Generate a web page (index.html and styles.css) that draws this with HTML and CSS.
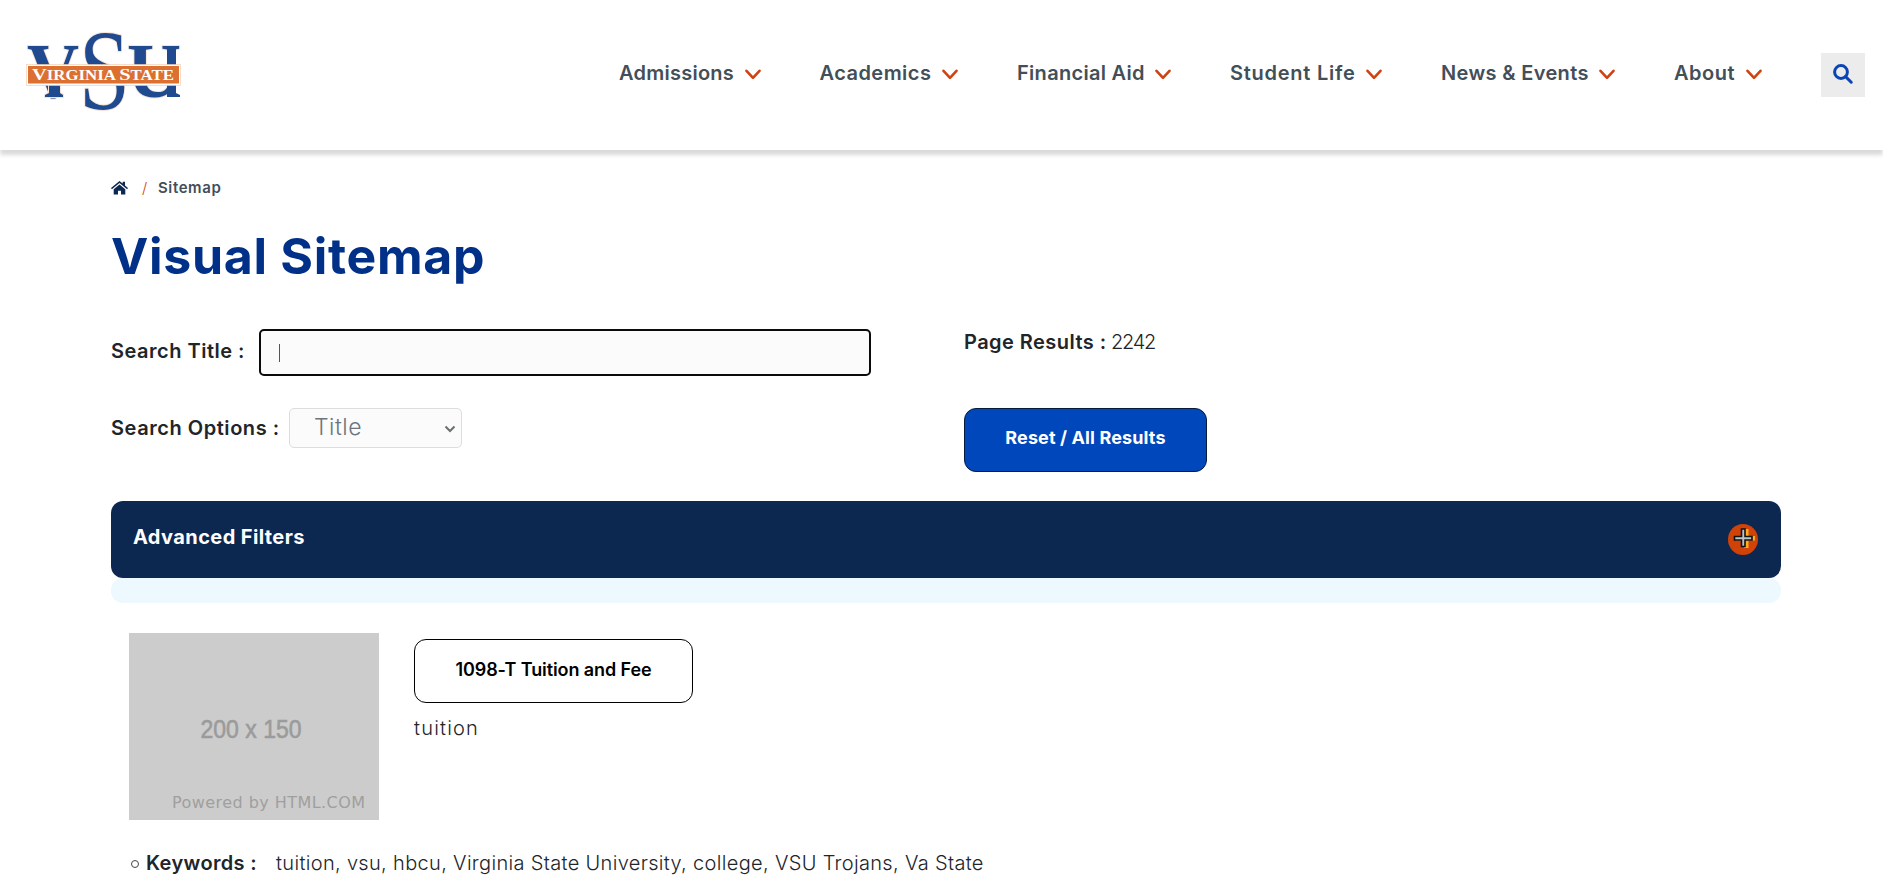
FILE: index.html
```html
<!DOCTYPE html>
<html lang="en">
<head>
<meta charset="utf-8">
<title>Visual Sitemap</title>
<link rel="stylesheet" href="styles.css">
</head>
<body>
<header class="site-header">
  <svg class="logo" width="170" height="100" viewBox="0 0 170 100" role="img" aria-label="VSU Virginia State">
    <g class="logo-letters">
      <text x="7" y="69" font-size="79" textLength="52" lengthAdjust="spacingAndGlyphs">V</text>
      <path d="M29 57h11v8l3 2v2H25v-2l4-2Z"/>
      <text x="107" y="69" font-size="79" textLength="54" lengthAdjust="spacingAndGlyphs">U</text>
      <path class="logo-stem" d="M147 18h9v47l4 2v2H147Z"/>
      <text class="logo-s" x="59" y="81" font-size="115" textLength="51" lengthAdjust="spacingAndGlyphs">S</text>
    </g>
    <rect x="6.500" y="36.500" width="154" height="21" fill="#fff" stroke="#f3c6a8" stroke-width=".6"/>
    <rect x="8" y="38" width="151" height="17.500" fill="#db7030"/>
    <text class="logo-name" x="12" y="52" font-size="17.500" textLength="142" lengthAdjust="spacingAndGlyphs">V<tspan font-size="14.500">IRGINIA </tspan>S<tspan font-size="14.500">TATE</tspan></text>
  </svg>
  <nav class="nav">
    <a class="nav-item"><span class="n1">Admissions</span><svg class="chev" viewBox="0 0 16 11"><path d="M1.500 1.800 8 8.800l6.500-7"/></svg></a>
    <a class="nav-item"><span class="n2">Academics</span><svg class="chev" viewBox="0 0 16 11"><path d="M1.500 1.800 8 8.800l6.500-7"/></svg></a>
    <a class="nav-item"><span class="n3">Financial Aid</span><svg class="chev" viewBox="0 0 16 11"><path d="M1.500 1.800 8 8.800l6.500-7"/></svg></a>
    <a class="nav-item"><span class="n4">Student Life</span><svg class="chev" viewBox="0 0 16 11"><path d="M1.500 1.800 8 8.800l6.500-7"/></svg></a>
    <a class="nav-item"><span class="n5">News &amp; Events</span><svg class="chev" viewBox="0 0 16 11"><path d="M1.500 1.800 8 8.800l6.500-7"/></svg></a>
    <a class="nav-item"><span class="n6">About</span><svg class="chev" viewBox="0 0 16 11"><path d="M1.500 1.800 8 8.800l6.500-7"/></svg></a>
  </nav>
  <button class="search-btn" aria-label="Search"><svg width="20" height="20" viewBox="0 0 20 20"><circle cx="8" cy="8" r="6.400"/><path d="m12.600 12.600 5.600 5.600"/></svg></button>
</header>
<main class="page">
  <div class="crumbs">
    <svg class="home" width="17" height="14" viewBox="0 0 17 14"><path d="M8.500 3.400 14.300 8.200V13.500H10V9.700H7V13.500H2.700V8.200Z"/><path d="M8.500 0 11.700 2.600V.8H14V4.600L17 7.100 16.100 8.200 8.500 2 .9 8.200 0 7.100Z"/></svg>
    <span class="slash">/</span><span class="crumb">Sitemap</span>
  </div>
  <h1 class="title"><span>Visual Sitemap</span></h1>
  <div class="form">
    <div class="row-title"><label class="l1">Search Title :</label><div class="input"><i class="caret"></i></div></div>
    <div class="results"><b class="l3">Page Results :</b><span class="count">2242</span></div>
    <div class="row-options"><label class="l2">Search Options :</label><div class="select"><span>Title</span><svg width="12" height="8" viewBox="0 0 12 8"><path d="m1.500 1.500 4.500 4.500 4.500-4.500"/></svg></div></div>
    <button class="btn reset"><span>Reset / All Results</span></button>
  </div>
  <section class="filters">
    <div class="filters-bar"><span class="filters-label">Advanced Filters</span>
      <svg width="30" height="31" viewBox="0 0 30 31"><ellipse cx="15" cy="15.500" rx="15" ry="15.500" fill="#d04208"/><path d="M16 5h4.500v7H27v4.500h-6.500V24H16v-7.500H8V12h8Z" fill="#ffab1a"/><path d="M13.500 5h3.500v7.500h7v3.500h-7v6.500h-3.500V16h-7v-3.500h7Z" fill="#b9c4c8" stroke="#111" stroke-width="1.600"/></svg>
    </div>
    <div class="filters-body"></div>
  </section>
  <article class="entry">
    <svg class="thumb" width="250" height="187" viewBox="0 0 250 187"><rect width="250" height="187" fill="#ccc"/><text class="dim" x="71.500" y="105" textLength="101" lengthAdjust="spacingAndGlyphs">200 x 150</text><text class="powered" x="43" y="175" textLength="193">Powered by HTML.COM</text></svg>
    <div class="entry-body"><a class="btn outline"><span>1098-T Tuition and Fee</span></a><p class="desc"><span>tuition</span></p></div>
  </article>
  <div class="keywords"><i class="dot"></i><b class="kw">Keywords :</b><span class="kw-list">tuition, vsu, hbcu, Virginia State University, college, VSU Trojans, Va State</span></div>
</main>
</body>
</html>
```
FILE: styles.css
```css
* { box-sizing: border-box; }
body { margin: 0; height: 880px; overflow: hidden; background: #fff; color: #212529; font: 300 20px/30px Inter, "Open Sans", sans-serif; }
button { font-family: inherit; }
span, b, label { white-space: nowrap; }
svg { display: block; flex: none; }

.site-header { height: 150px; display: flex; align-items: flex-start; padding-left: 20px; background: #fff; box-shadow: 0 5px 4px 0 rgba(0, 0, 0, .15); }
.logo { margin-top: 28px; }
.logo-letters { font-family: "Liberation Serif", serif; font-weight: 700; fill: #204a90; paint-order: stroke; stroke: #f5e3d8; stroke-width: 2px; }
.logo-stem { stroke: none; }
.logo-s { font-weight: 400; }
.logo-name { font-family: "Liberation Serif", serif; font-weight: 700; fill: #fff; }
.nav { display: flex; gap: 59px; margin-left: 429px; padding-top: 58px; }
.nav-item { display: flex; align-items: center; gap: 11px; color: #434f58; font-weight: 600; }
.n1 { width: 114.5px; letter-spacing: .25px; }
.n2 { width: 111.5px; letter-spacing: .45px; }
.n3 { width: 127px; letter-spacing: .3px; }
.n4 { width: 125px; letter-spacing: .75px; }
.n5 { width: 147px; letter-spacing: .35px; }
.n6 { width: 61px; letter-spacing: .5px; }
.chev { width: 16px; height: 11px; margin-top: 2px; fill: none; stroke: #cf4310; stroke-width: 2.6; stroke-linecap: round; stroke-linejoin: round; }
.search-btn { width: 44px; height: 44px; margin: 53px 18px 0 auto; padding: 0 0 2px; border: 0; background: #ececec; display: grid; place-items: center; }
.search-btn svg { fill: none; stroke: #0b45b5; stroke-width: 3; stroke-linecap: round; }

.page { padding: 0 102px 0 111px; }
.crumbs { display: flex; align-items: center; height: 30px; margin-top: 23px; font-size: 15px; }
.home { fill: #0d2850; }
.slash { margin-left: 14px; width: 16px; color: #cf4310; }
.crumb { font-weight: 600; color: #434f58; letter-spacing: .6px; }
.title { margin: 23px 0 0; height: 60px; font-size: 50px; line-height: 60px; font-weight: 700; color: #003087; letter-spacing: .7px; }

.form { display: grid; grid-template-columns: 853px auto; grid-template-rows: 79px 93px; justify-content: start; margin-top: 43px; font-weight: 600; }
.row-title, .row-options { display: flex; align-items: flex-start; }
.row-title label { width: 148px; padding-top: 7px; letter-spacing: .5px; }
.input { width: 612px; height: 47px; border: 2px solid #0b0b0b; border-radius: 5px; background: #fbfbfb; padding: 13px 18px; }
.caret { display: block; width: 1px; height: 18px; background: #555; }
.results { display: flex; line-height: 27px; }
.results b { width: 147px; font-weight: 600; letter-spacing: .45px; }
.count { font-weight: 300; letter-spacing: -1.3px; }
.row-options label { width: 178px; padding-top: 5px; letter-spacing: .55px; }
.select { width: 173px; height: 40px; border: 1px solid #ddd; border-radius: 5px; background: #fbfbfb; display: flex; align-items: center; justify-content: space-between; padding: 0 5px 3px 24px; font-size: 23px; font-weight: 300; color: #6c757d; letter-spacing: .5px; }
.select svg { margin-top: 4px; fill: none; stroke: #6a6f73; stroke-width: 2; }
.btn { display: flex; justify-content: center; height: 64px; padding: 15px 0 0; border: 1px solid #000; border-radius: 12px; font-size: 18px; line-height: 30px; font-weight: 600; color: #000; letter-spacing: -.1px; }
.reset { width: 243px; padding-top: 14px; background: #0047bb; border-color: #071a3f; color: #fff; font-weight: 700; letter-spacing: .12px; }
.reset span { height: 30px; }

.filters-bar { height: 77px; display: flex; justify-content: space-between; padding: 21px 23px 0 22px; border-radius: 12px; background: #0d2850; color: #fff; font-weight: 700; }
.filters-label { letter-spacing: .4px; }
.filters-bar svg { margin-top: 2px; }
.filters-body { height: 25px; border-radius: 12px; background: #eef8ff; }

.entry { display: flex; gap: 35px; margin: 30px 0 0 18px; }
.dim { font: 400 26px "Liberation Sans", sans-serif; fill: #9b9b9b; stroke: #9b9b9b; stroke-width: .6px; }
.powered { font: 400 16px "DejaVu Sans", sans-serif; fill: #9f9f9f; }
.entry-body { padding-top: 6px; }
.outline { width: 279px; }
.desc { margin: 10px 0 0; letter-spacing: 1.2px; }
.keywords { display: flex; align-items: center; height: 30px; margin: 28px 0 0 20px; }
.dot { width: 8px; height: 8px; margin: 2px 7px 0 0; border: 1px solid #444; border-radius: 50%; }
.kw { width: 130px; font-weight: 600; letter-spacing: .35px; }
.kw-list { letter-spacing: .33px; }
```
